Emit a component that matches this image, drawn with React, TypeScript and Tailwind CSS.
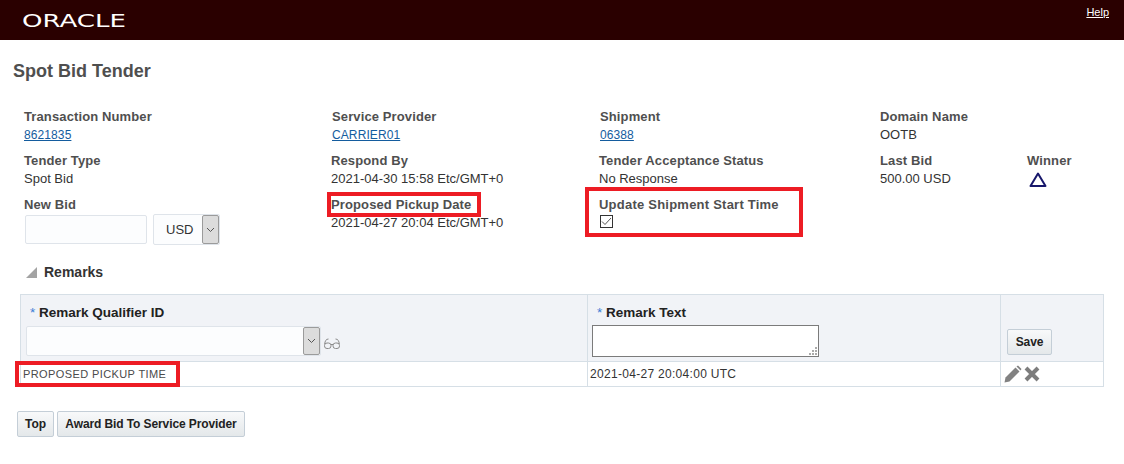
import React from 'react';

const labelCls = "text-[13px] leading-[16px] font-bold tracking-[0.12px] text-[#4f4f4f]";
const valueCls = "text-[13px] leading-[16px] text-[#333333] mt-[2px]";
const linkCls = "text-[12px] leading-[16px] tracking-[0.1px] text-[#145c9e] underline mt-[2px] block";
const btnCls = "border border-[#c4ced7] rounded-[2px] bg-gradient-to-b from-[#f8f9fa] to-[#e4e8ea] text-[12px] font-bold tracking-[-0.1px] text-[#222222] h-[26px] flex items-center justify-center";

const Field = ({ label, value, link, shift }: { label: string; value: string; link?: boolean; shift?: boolean }) => (
  <div className={shift ? "h-[44px] ml-[1px]" : "h-[44px]"}>
    <div className={labelCls}>{label}</div>
    {link ? <a className={linkCls}>{value}</a> : <div className={valueCls}>{value}</div>}
  </div>
);

const Chevron = () => (
  <svg width="9" height="6" viewBox="0 0 9 6" fill="none" stroke="#555" strokeWidth="1">
    <path d="M1 1 L4.5 4.5 L8 1" />
  </svg>
);

const DropButton = () => (
  <div className="w-[17px] self-stretch bg-[#dcdcdc] border border-[#9b9b9b] rounded-[2px] flex items-center justify-center">
    <Chevron />
  </div>
);

const Annotation = ({ className }: { className: string }) => (
  <div className={"absolute border-[4px] border-[#ed1c24] pointer-events-none " + className} />
);

export default function App() {
  return (
    <div className="relative w-[1124px] h-[464px] bg-white overflow-hidden font-['Liberation_Sans',Arial,sans-serif]">
      <header className="h-[40px] bg-[#2a0000] flex justify-between pl-[23px] pr-[15px]">
        <svg width="106" height="40" viewBox="0 0 106 40" className="block">
          <text x="-1" y="26.5" fill="#ffffff" fontSize="17" fontFamily="'DejaVu Sans', sans-serif" textLength="104" lengthAdjust="spacingAndGlyphs">ORACLE</text>
        </svg>
        <a className="text-[11px] leading-[13px] mt-[6px] text-white underline">Help</a>
      </header>

      <h1 className="text-[18px] leading-[20px] font-bold text-[#4f4f4f] ml-[13px] mt-[21px]">Spot Bid Tender</h1>

      <div className="grid grid-cols-[307px_268px_281px_147px_60px] ml-[24px] mt-[28px]">
        <Field label="Transaction Number" value="8621835" link />
        <Field label="Service Provider" value="CARRIER01" link shift />
        <Field label="Shipment" value="06388" link shift />
        <Field label="Domain Name" value="OOTB" />
        <div />

        <Field label="Tender Type" value="Spot Bid" />
        <Field label="Respond By" value="2021-04-30 15:58 Etc/GMT+0" />
        <Field label="Tender Acceptance Status" value="No Response" />
        <Field label="Last Bid" value="500.00 USD" />
        <div className="h-[44px]">
          <div className={labelCls}>Winner</div>
          <svg width="18" height="16" viewBox="0 0 18 16" fill="none" className="ml-[2px] mt-[3px]">
            <path d="M9 1.5 L16.5 14 H1.5 Z" stroke="#17176b" strokeWidth="2" strokeLinejoin="round" />
          </svg>
        </div>

        <div>
          <div className={labelCls}>New Bid</div>
          <div className="flex mt-[2px] ml-[1px]">
            <div className="w-[122px] h-[29px] bg-[#fcfdfe] border border-[#dfe4ea] rounded-[2px]" />
            <div className="w-[67px] h-[31px] ml-[6px] -mt-[1px] bg-[#fcfdfe] border border-[#dfe4ea] rounded-[2px] flex">
              <span className="flex-1 text-[13px] text-[#333333] leading-[29px] pl-[12px]">USD</span>
              <DropButton />
            </div>
          </div>
        </div>
        <Field label="Proposed Pickup Date" value="2021-04-27 20:04 Etc/GMT+0" />
        <div>
          <div className="text-[13px] leading-[16px] font-bold tracking-[0.23px] text-[#4f4f4f]">Update Shipment Start Time</div>
          <div className="w-[13px] h-[13px] ml-[1px] border border-[#333333] mt-[2px] flex items-center justify-center">
            <svg width="11" height="9" viewBox="0 0 11 9" fill="none" stroke="#555" strokeWidth="1">
              <path d="M1 4.5 L4 7.5 L10 1" />
            </svg>
          </div>
        </div>
      </div>

      <div className="flex items-center ml-[26px] mt-[19px] h-[16px]">
        <svg width="11" height="11" viewBox="0 0 11 11"><path d="M11 0 V11 H0 Z" fill="#a3a3a3" /></svg>
        <span className="ml-[7px] text-[14px] font-bold text-[#333333]">Remarks</span>
      </div>

      <div className="mx-[20px] mt-[14px] border border-[#d6dfe6]">
        <div className="grid grid-cols-[566px_413px_1fr] bg-[#f1f3f7] h-[66px]">
          <div className="pl-[5px] pt-[9px]">
            <div className="text-[13.5px] leading-[18px] font-bold text-[#222222] pl-[4px]"><span className="text-[#3a7bd5] font-normal">*</span> Remark Qualifier ID</div>
            <div className="flex items-center mt-[4px]">
              <div className="w-[295px] h-[30px] bg-[#fcfdfe] border border-[#dfe4ea] rounded-[2px] flex justify-end">
                <DropButton />
              </div>
              <svg width="16" height="11" viewBox="0 0 16 11" fill="none" stroke="#8a8a8a" strokeWidth="1" className="ml-[3px] mt-[4px]">
                <rect x="0.5" y="5" width="6.5" height="5.5" rx="2.5" />
                <rect x="9" y="5" width="6.5" height="5.5" rx="2.5" />
                <path d="M7 6.5 H9 M0.7 6 C1 3 2 1 4.5 1 M15.3 6 C15 3 14 1 11.5 1" />
              </svg>
            </div>
          </div>
          <div className="border-l border-[#d6dfe6] pl-[4px] pt-[9px]">
            <div className="text-[13.5px] leading-[18px] font-bold text-[#222222] pl-[5px]"><span className="text-[#3a7bd5] font-normal">*</span> Remark Text</div>
            <div className="relative w-[227px] h-[32px] mt-[3px] bg-white border border-[#7b7b7b]">
              <svg width="8" height="8" viewBox="0 0 8 8" className="absolute right-[1px] bottom-[1px]" fill="#aaa">
                <rect x="6" y="0" width="2" height="2" />
                <rect x="3" y="3" width="2" height="2" />
                <rect x="6" y="3" width="2" height="2" />
                <rect x="0" y="6" width="2" height="2" />
                <rect x="3" y="6" width="2" height="2" />
                <rect x="6" y="6" width="2" height="2" />
              </svg>
            </div>
          </div>
          <div className="border-l border-[#d6dfe6] pl-[6px] pt-[34px]">
            <button className={btnCls + " w-[45px]"}>Save</button>
          </div>
        </div>
        <div className="grid grid-cols-[566px_413px_1fr] h-[25px] border-t border-[#d6dfe6] text-[#4a4a4a]">
          <div className="pl-[2px] text-[11px] leading-[24px] tracking-[0.4px]">PROPOSED PICKUP TIME</div>
          <div className="border-l border-[#d6dfe6] pl-[2px] text-[12px] leading-[24px] tracking-[0.3px] text-[#333333]">2021-04-27 20:04:00 UTC</div>
          <div className="border-l border-[#d6dfe6] pl-[3px] flex items-center gap-[2px]">
            <svg width="18" height="18" viewBox="0 0 18 18" fill="#828282">
              <path d="M0.5 17.5 L1.5 12.5 L11.5 2.5 L15.5 6.5 L5.5 16.5 Z" />
              <path d="M12.5 1.5 L14 0.5 L17.5 4 L16.5 5.5 Z" />
            </svg>
            <svg width="16" height="16" viewBox="0 0 16 16" fill="none" stroke="#7d7d7d" strokeWidth="4">
              <path d="M2 2 L14 14 M14 2 L2 14" />
            </svg>
          </div>
        </div>
      </div>

      <div className="flex gap-[3px] ml-[17px] mt-[24px]">
        <button className={btnCls + " w-[37px]"}>Top</button>
        <button className={btnCls + " w-[188px]"}>Award Bid To Service Provider</button>
      </div>

      <Annotation className="left-[327px] top-[192px] w-[154px] h-[25px]" />
      <Annotation className="left-[585px] top-[187px] w-[218px] h-[50px]" />
      <Annotation className="left-[15px] top-[361px] w-[165px] h-[26px]" />
    </div>
  );
}
